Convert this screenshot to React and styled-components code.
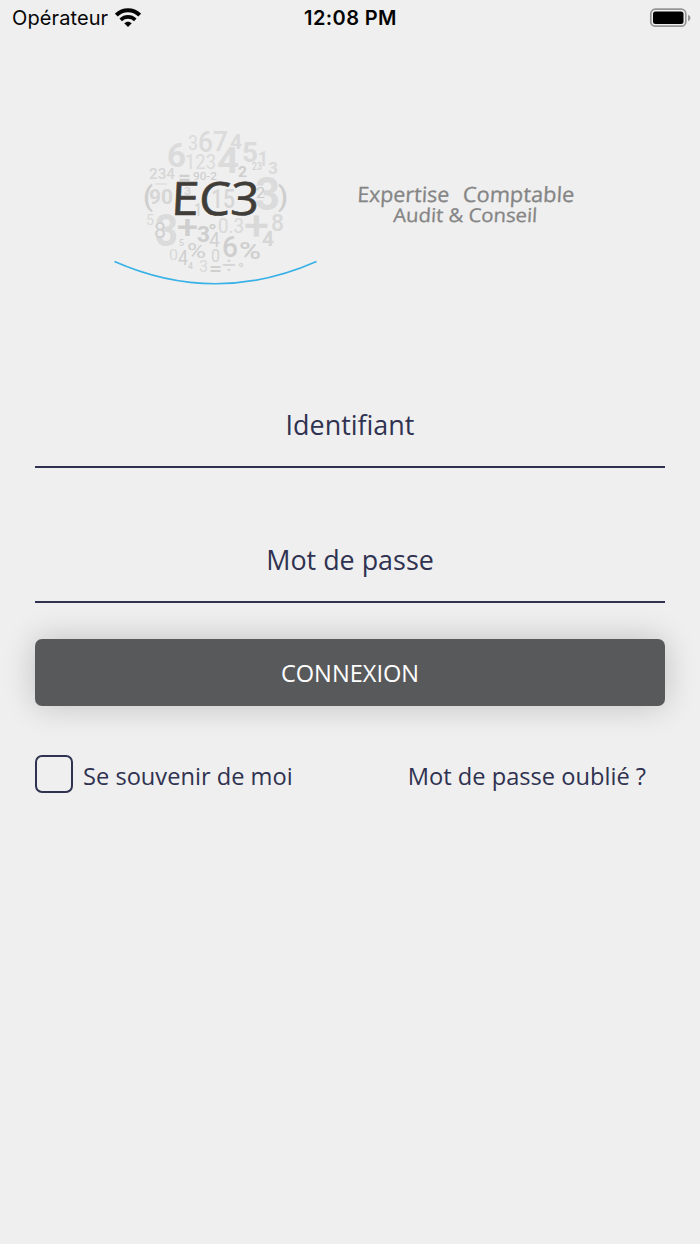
import React from 'react';
import styled, { createGlobalStyle } from 'styled-components';

const ink = '#2f3250';

// glyphs of the number cloud: text, left, baseline, font size, width, fill, weight
const digits = [
  ['3', 188, 150, 21, 10, '#dbdbdb', 400],
  ['6', 198, 152, 29, 15, '#dbdbdb', 500],
  ['7', 213, 151, 28, 15, '#dbdbdb', 500],
  ['4', 230, 149, 21, 12, '#dbdbdb', 700],
  ['6', 167, 167, 33, 19, '#dbdbdb', 700],
  ['123', 185, 169, 21, 31, '#dbdbdb', 400],
  ['4', 217, 173, 37, 22, '#dbdbdb', 700],
  ['5', 242, 162, 28, 16, '#dbdbdb', 700],
  ['1', 258, 166, 21, 10, '#dbdbdb', 700],
  ['23', 252, 170, 10, 10, '#d4d4d4', 500],
  ['3', 268, 174, 16, 10, '#dbdbdb', 700],
  ['234', 149, 179, 15, 26, '#d6d6d6', 500],
  ['=', 178, 184, 21, 13, '#cfcfcf', 700],
  ['90-2', 193, 180, 11, 24, '#d0d0d0', 500],
  ['2', 238, 177, 15, 9, '#cecece', 700],
  ['(', 143, 206, 27, 10, '#cecece', 500],
  ['90', 149, 204, 21, 24, '#d6d6d6', 700],
  ['3', 184, 195, 11, 7, '#d6d6d6', 700],
  ['1', 194, 216, 18, 8, '#d6d6d6', 500],
  ['15', 211, 208, 25, 24, '#d6d6d6', 500],
  ['3', 255, 210, 47, 25, '#dbdbdb', 700],
  ['2', 256, 198, 15, 9, '#c9c9c9', 400],
  [')', 278, 206, 27, 10, '#cecece', 500],
  ['5', 146, 225, 15, 8, '#d9d9d9', 400],
  ['3', 155, 246, 45, 23, '#dbdbdb', 700],
  ['8', 154, 238, 22, 12, '#d0d0d0', 400],
  ['+', 177, 238, 34, 21, '#cecece', 500],
  ['3', 197, 242, 22, 13, '#cecece', 700],
  ['°', 208, 239, 20, 9, '#cecece', 700],
  ['0.3', 218, 233, 21, 26, '#d9d9d9', 400],
  ['+', 244, 240, 40, 25, '#d9d9d9', 500],
  ['8', 271, 231, 23, 13, '#d9d9d9', 500],
  ['4', 262, 246, 20, 12, '#d6d6d6', 700],
  ['5', 179, 246, 9, 5, '#d2d2d2', 500],
  ['4', 209, 247, 20, 11, '#d2d2d2', 400],
  ['0', 169, 260, 15, 9, '#d9d9d9', 400],
  ['4', 178, 265, 21, 10, '#cfcfcf', 400],
  ['%', 187, 258, 20, 19, '#cfcfcf', 400],
  ['0', 211, 262, 18, 9, '#d4d4d4', 400],
  ['6', 222, 257, 29, 16, '#cfcfcf', 500],
  ['%', 239, 259, 23, 22, '#cfcfcf', 500],
  ['4', 188, 269, 9, 5, '#d2d2d2', 500],
  ['3', 199, 272, 16, 9, '#d9d9d9', 400],
  ['=', 209, 276, 20, 13, '#cfcfcf', 500],
  ['÷', 222, 273, 22, 14, '#d6d6d6', 400],
  ['°', 238, 274, 14, 6, '#d2d2d2', 500],
];

const GlobalStyle = createGlobalStyle`
  * {
    box-sizing: border-box;
  }

  body {
    margin: 0;
    background: #efefef;
  }
`;

const Screen = styled.div`
  min-height: 1244px;
  background: #efefef;
  color: ${ink};
  font-family: 'Open Sans', sans-serif;
`;

const StatusBar = styled.header`
  display: grid;
  grid-template-columns: 1fr auto 1fr;
  align-items: center;
  height: 36px;
  padding: 0 9px 0 12px;
  color: #050505;
  font-family: Inter, sans-serif;
  font-size: 20px;
`;

const Carrier = styled.div`
  display: flex;
  align-items: center;
  gap: 7px;
  letter-spacing: 0.1px;
`;

const Clock = styled.div`
  margin-left: -2px;
  font-weight: 600;
  letter-spacing: 0.4px;
`;

const Battery = styled.svg`
  justify-self: end;
`;

const Brand = styled.div`
  height: 264px;

  svg {
    display: block;
  }
`;

const Form = styled.form`
  padding: 90px 35px 0;
`;

const Field = styled.input`
  display: block;
  width: 100%;
  height: 78px;
  margin: 0 0 57px;
  padding: 0 0 7px;
  border: 0;
  border-bottom: 2px solid ${ink};
  border-radius: 0;
  outline: 0;
  background: transparent;
  color: ${ink};
  font-family: inherit;
  font-size: 26.9px;
  text-align: center;

  &::placeholder {
    color: ${ink};
    opacity: 1;
  }
`;

const Submit = styled.button`
  display: block;
  width: 100%;
  height: 67px;
  margin-top: -21px;
  padding: 0;
  border: 0;
  border-radius: 7px;
  background: #58595b;
  box-shadow: 0 0 32px rgba(0, 0, 0, 0.2);
  color: #fff;
  font-family: inherit;
  font-size: 23.6px;
`;

const Options = styled.div`
  display: flex;
  align-items: center;
  justify-content: space-between;
  height: 38px;
  margin-top: 49px;
  padding-right: 19px;
  font-size: 23.65px;
  line-height: 34px;
`;

const Remember = styled.label`
  display: flex;
  align-items: center;
  gap: 10px;
`;

const Checkbox = styled.input`
  appearance: none;
  width: 38px;
  height: 38px;
  margin: 0;
  border: 2px solid ${ink};
  border-radius: 7px;
`;

const Label = styled.span`
  padding-top: 3px;
`;

const Forgot = styled.a`
  padding-top: 4px;
  color: inherit;
  text-decoration: none;
`;

const Wifi = () => (
  <svg width="26" height="20" viewBox="0 0 26 20" fill="none" stroke="#050505" strokeWidth="4">
    <path d="M1.3 7.1C8 .7 18 .7 24.7 7.1" />
    <path d="M5.7 11.8C10 7.9 16 7.9 20.3 11.8" strokeWidth="3.6" />
    <path d="M9.2 15.3C11.4 13.2 14.6 13.2 16.8 15.3L13 19.1Z" fill="#050505" stroke="none" />
  </svg>
);

const Logo = () => (
  <svg width="700" height="264" viewBox="0 36 700 264">
    <g fontFamily="Roboto, sans-serif">
      {digits.map(([text, x, y, size, width, fill, weight], index) => (
        <text
          key={index}
          x={x}
          y={y}
          fontSize={size}
          textLength={width}
          lengthAdjust="spacingAndGlyphs"
          fill={fill}
          fontWeight={weight}
        >
          {text}
        </text>
      ))}
    </g>
    <path d="M155 184H167" stroke="#d6d6d6" />
    <text
      transform="translate(170.5 215) skewX(-3)"
      fontFamily="Open Sans, sans-serif"
      fontSize="46"
      textLength="88"
      lengthAdjust="spacingAndGlyphs"
      fill="#403d39"
      stroke="#403d39"
      strokeWidth=".6"
    >
      EC3
    </text>
    <path d="M114.5 261.5Q215.5 306 316.5 261.5" fill="none" stroke="#38b1e6" strokeWidth="1.7" />
    <g fontFamily="Open Sans, sans-serif" fill="#858585" stroke="#858585" strokeWidth=".3">
      <text transform="translate(357 202) skewX(-3)" fontSize="21" textLength="92" lengthAdjust="spacingAndGlyphs">Expertise</text>
      <text transform="translate(462.5 202) skewX(-3)" fontSize="21" textLength="111.5" lengthAdjust="spacingAndGlyphs">Comptable</text>
      <text transform="translate(393 222) skewX(-3)" fontSize="19" textLength="144" lengthAdjust="spacingAndGlyphs">Audit &amp; Conseil</text>
    </g>
  </svg>
);

const App = () => (
  <Screen>
    <GlobalStyle />

    <StatusBar>
      <Carrier>Opérateur <Wifi /></Carrier>
      <Clock>12:08 PM</Clock>
      <Battery width="42" height="20" viewBox="0 0 42 20">
        <rect x="1.8" y="1.2" width="35" height="17" rx="4.5" fill="none" stroke="#969696" strokeWidth="1.7" />
        <rect x="4" y="3.5" width="30.5" height="12.5" rx="2.5" />
        <path d="M39 6.7Q41.5 7.5 41.5 10T39 13.3Z" fill="#969696" />
      </Battery>
    </StatusBar>

    <Brand><Logo /></Brand>

    <Form>
      <Field placeholder="Identifiant" />
      <Field type="password" placeholder="Mot de passe" />
      <Submit type="button">CONNEXION</Submit>

      <Options>
        <Remember><Checkbox type="checkbox" /><Label>Se souvenir de moi</Label></Remember>
        <Forgot href="#">Mot de passe oublié ?</Forgot>
      </Options>
    </Form>
  </Screen>
);

export default App;
